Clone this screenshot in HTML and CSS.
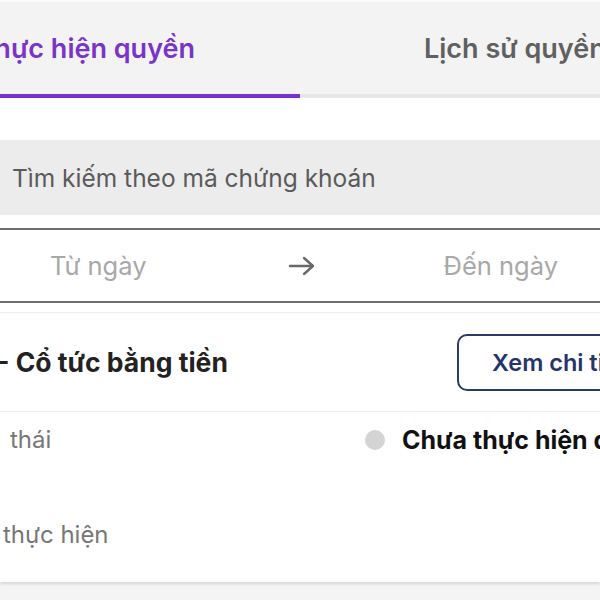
FILE: index.html
```html
<!DOCTYPE html>
<html lang="vi">
<head>
<meta charset="utf-8">
<link rel="stylesheet" href="styles.css">
</head>
<body>
<div class="screen">
  <div class="tabs">
    <div class="tab tab--active"><span class="tab-label">Chờ thực hiện quyền</span></div>
    <div class="tab"><span class="tab-label">Lịch sử quyền</span></div>
  </div>

  <div class="filters">
    <div class="search">Tìm kiếm theo mã chứng khoán</div>
    <div class="dates">
      <span class="date date--from">Từ ngày</span>
      <svg class="arrow" width="28" height="22" viewBox="0 0 28 22"><path d="M2 11H25M16 3L25 11L16 19" fill="none" stroke="#6a6a6a" stroke-width="2.4" stroke-linecap="round" stroke-linejoin="round"/></svg>
      <span class="date date--to">Đến ngày</span>
    </div>
  </div>

  <div class="card">
    <div class="card-head">
      <span class="card-title">- Cổ tức bằng tiền</span>
      <button class="btn-detail">Xem chi tiết</button>
    </div>
    <div class="card-body">
      <div class="field">
        <span class="field-label">thái</span>
        <span class="field-value"><span class="dot"></span>Chưa thực hiện quyền</span>
      </div>
      <div class="field field--second">
        <span class="field-label field-label--tight">thực hiện</span>
      </div>
    </div>
  </div>
</div>
</body>
</html>
```

FILE: styles.css
```css
* { box-sizing: border-box; }
html, body {
  margin: 0;
  padding: 0;
  width: 600px;
  height: 600px;
  overflow: hidden;
  background: #f4f4f4;
  font-family: Inter, "Noto Sans", "Liberation Sans", sans-serif;
}
.screen {
  width: 600px;
  height: 600px;
  overflow: hidden;
  display: flex;
  flex-direction: column;
}
.tabs {
  display: flex;
  height: 98px;
  flex: none;
  background: #f3f3f3;
  border-top: 2px solid #fbfbfb;
}
.tab {
  flex: 0 0 300px;
  min-width: 0;
  display: flex;
  align-items: center;
  white-space: nowrap;
  border-bottom: 4px solid #e7e7e7;
  font-size: 27px;
  font-weight: 600;
  color: #606060;
  padding-left: 124px;
}
.tab-label { flex: none; }
.tab--active {
  justify-content: flex-end;
  padding-left: 0;
  padding-right: 105px;
  color: #7a34c8;
  border-bottom-color: #7a30d0;
}
.filters {
  background: #fff;
  padding-top: 42px;
  padding-bottom: 9px;
}
.search {
  height: 75px;
  background: #ececec;
  display: flex;
  align-items: center;
  padding-left: 12px;
  font-size: 24.5px;
  color: #5a5a5a;
  white-space: nowrap;
}
.dates {
  margin-top: 13px;
  height: 75px;
  border-top: 2px solid #6e6e6e;
  border-bottom: 2px solid #6e6e6e;
  display: flex;
  align-items: center;
  font-size: 25.5px;
  color: #a8a8a8;
  white-space: nowrap;
}
.date { flex: none; }
.date--from { margin-left: 50px; }
.arrow { margin-left: 141px; flex: none; }
.date--to { margin-left: 128px; }
.card {
  background: #fff;
  border-top: 1px solid #ececec;
  box-shadow: 0 2px 3px rgba(0,0,0,0.13);
  height: 270px;
}
.card-head {
  height: 99px;
  display: flex;
  align-items: center;
  border-bottom: 1px solid #eeeeee;
  white-space: nowrap;
}
.card-title {
  margin-left: -3px;
  font-size: 26.5px;
  font-weight: 700;
  color: #222;
}
.btn-detail {
  margin-left: auto;
  margin-right: -70px;
  width: 213px;
  flex: none;
  height: 57px;
  border: 2px solid #2d3a6b;
  border-radius: 10px;
  background: #fff;
  text-align: left;
  padding-left: 33px;
  font-family: inherit;
  font-size: 23.5px;
  font-weight: 600;
  color: #27346a;
}
.card-body {
  display: flex;
  flex-direction: column;
}
.field {
  height: 55px;
  display: flex;
  align-items: center;
  white-space: nowrap;
}
.field--second {
  margin-top: 40px;
}
.field-label {
  margin-left: 10px;
  font-size: 24px;
  color: #777;
}
.field-label--tight { margin-left: 3px; }
.field-value {
  margin-left: auto;
  width: 235px;
  flex: none;
  display: flex;
  align-items: center;
  font-size: 25px;
  font-weight: 700;
  color: #111;
}
.dot {
  width: 20px;
  height: 20px;
  border-radius: 50%;
  background: #d4d4d4;
  margin-right: 17px;
  flex: none;
}
```
